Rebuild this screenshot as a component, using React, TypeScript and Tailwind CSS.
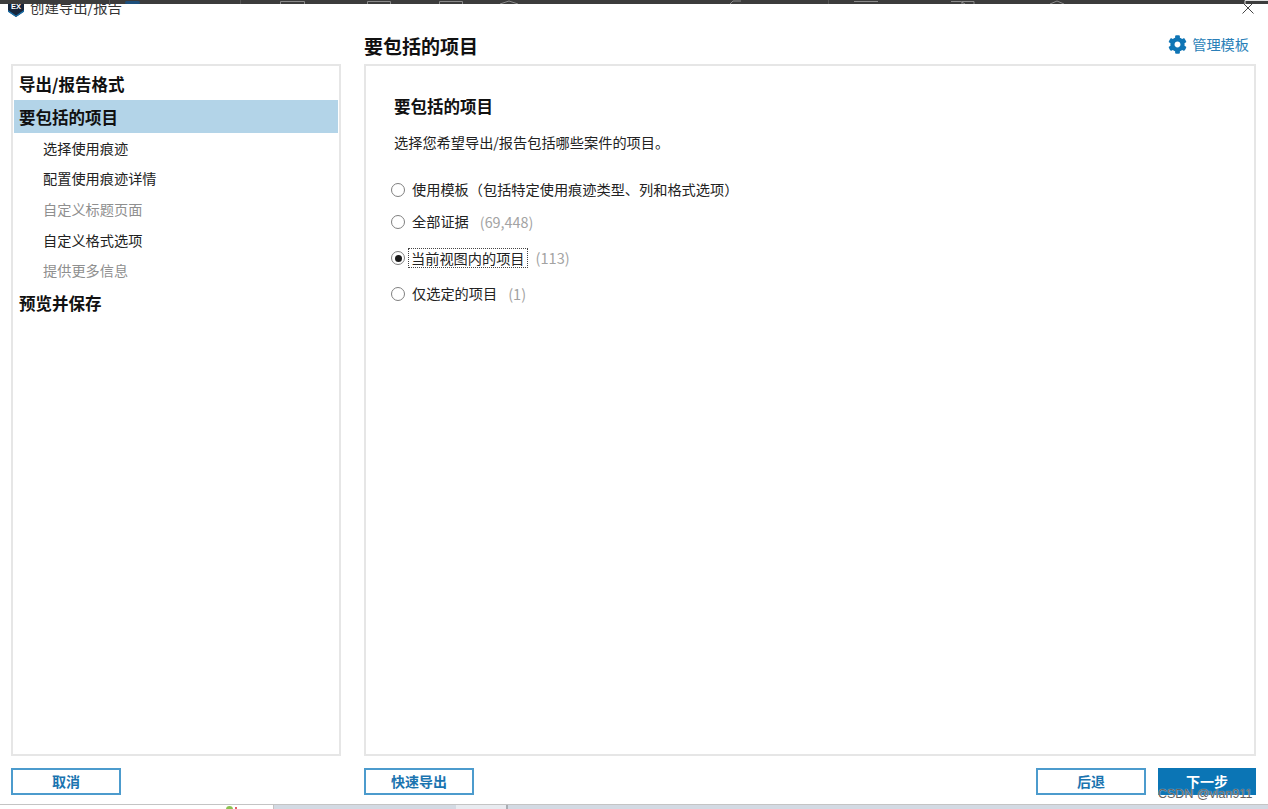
import React from 'react';
import { FaCog } from 'react-icons/fa';

const cjk = '"Noto Sans CJK SC", "Noto Sans", sans-serif';

interface NavItem {
  label: string;
  kind: 'first' | 'last' | 'active' | 'sub' | 'disabled';
}

const navItems: NavItem[] = [
  { label: '导出/报告格式', kind: 'first' },
  { label: '要包括的项目', kind: 'active' },
  { label: '选择使用痕迹', kind: 'sub' },
  { label: '配置使用痕迹详情', kind: 'sub' },
  { label: '自定义标题页面', kind: 'disabled' },
  { label: '自定义格式选项', kind: 'sub' },
  { label: '提供更多信息', kind: 'disabled' },
  { label: '预览并保存', kind: 'last' },
];

const navClass = (kind: NavItem['kind']) => {
  if (kind === 'first') return 'h-[32px] pl-[5px] text-[16.5px] font-bold text-[#111]';
  if (kind === 'last') return 'h-[34px] pl-[5px] text-[16.5px] font-bold text-[#111]';
  if (kind === 'active') return 'h-[33px] pt-[2px] pl-[5px] text-[16.5px] font-bold text-[#111] bg-[#b3d4e8]';
  if (kind === 'sub') return 'h-[30.7px] pl-[29px] text-[14.2px] text-[#222]';
  return 'h-[30.7px] pl-[29px] text-[14.2px] text-[#8f8f8f]';
};

const Radio: React.FC<{ checked?: boolean }> = ({ checked }) => (
  <span className="flex h-[14px] w-[14px] shrink-0 items-center justify-center rounded-full border-[1.5px] border-[#808080] bg-white">
    {checked && <span className="h-[7px] w-[7px] rounded-full bg-[#1a1a1a]" />}
  </span>
);

const OutlineButton: React.FC<{ label: string; className?: string }> = ({ label, className = '' }) => (
  <button className={`h-[27px] w-[110px] border-2 border-[#4c9bcd] bg-white text-[14px] font-bold text-[#1a74b0] ${className}`}>
    {label}
  </button>
);

// 顶部被裁切的工具栏图标残影
const ToolbarScraps = () => (
  <svg className="absolute left-0 top-0" width="1268" height="4" fill="none" stroke="#8a8a8a" strokeWidth="1">
    <path d="M109.5 0v4M240.5 0v4M828.5 0v4" stroke="#555" />
    <path d="M280.5 4V1.5h24V4M367.5 4V1.5h23V4M439.5 4V1.5h23V4" />
    <path d="M500 4l9-3 9 3M1050 4l7-3 7 3" />
    <path d="M854 1.5h24M730 4l3-3h8M951 1.5h10l4 2.5M962 4V1.5h12V4" />
    <path d="M1245 4V0.5h23" stroke="#e0e0e0" />
    <rect x="125" y="1" width="15" height="3" rx="1.5" fill="#1d4f7c" stroke="none" />
  </svg>
);

export default function App() {
  return (
    <div
      className="relative flex h-[809px] w-full flex-col overflow-hidden bg-white"
      style={{ fontFamily: cjk }}
    >
      {/* 窗口上沿 */}
      <div className="relative z-10 h-[4px] shrink-0 bg-[#3c3c3c]">
        <ToolbarScraps />
      </div>

      {/* 标题栏 */}
      <div className="flex h-[10px] shrink-0 items-center pl-[8px] pr-[14px]">
        <svg width="16" height="18" viewBox="0 0 16 18" className="mt-[-2px]">
          <path d="M0 0h16v12.5L8 18 0 12.5z" fill="#17263c" />
          <path d="M0 11l8 5.5 8-5.5v1.8L8 18 0 12.8z" fill="#1a6fa8" />
          <text x="8" y="10" textAnchor="middle" fontSize="7.5" fontWeight="700" fill="#fff" fontFamily="Liberation Sans, sans-serif">
            EX
          </text>
        </svg>
        <span className="ml-[6px] mt-[-3px] text-[14.4px] leading-none text-[#333]">创建导出/报告</span>
        <svg width="12" height="12" viewBox="0 0 12 12" className="ml-auto mt-[-2px]" stroke="#444" strokeWidth="1" fill="none">
          <path d="M.5.5l11 11M11.5.5l-11 11" />
        </svg>
      </div>

      {/* 主体 */}
      <div className="grid flex-1 grid-cols-[330px_1fr] grid-rows-[50px_692px_48px] gap-x-[23px] pl-[11px] pr-[12px]">
        <div />
        <div className="flex items-center justify-between pt-[12px] pr-[7px]">
          <h1 className="text-[19px] font-bold leading-none text-[#111]">要包括的项目</h1>
          <div className="flex items-center gap-[5px] text-[14.2px] text-[#2a7fb8]">
            <FaCog className="h-[19px] w-[19px] text-[#0f75b5]" />
            <span>管理模板</span>
          </div>
        </div>

        {/* 左侧步骤 */}
        <nav className="border-2 border-[#e6e6e6] p-px pt-[2px]">
          {navItems.map((item) => (
            <div key={item.label} className={`flex items-center ${navClass(item.kind)}`}>
              {item.label}
            </div>
          ))}
        </nav>

        {/* 右侧内容 */}
        <section className="border-2 border-[#e6e6e6] pl-[28px] pt-[28px]">
          <h2 className="text-[16.5px] font-bold leading-[24px] text-[#111]">要包括的项目</h2>
          <p className="mt-[14px] text-[14.2px] leading-[20px] text-[#222]">选择您希望导出/报告包括哪些案件的项目。</p>

          <div className="ml-[-3px] mt-[28px] flex flex-col text-[14.2px] text-[#222]">
            <label className="flex h-[20px] items-center gap-[7px]">
              <Radio />
              <span>使用模板（包括特定使用痕迹类型、列和格式选项）</span>
            </label>
            <label className="mt-[12px] flex h-[20px] items-center gap-[7px]">
              <Radio />
              <span>全部证据</span>
              <span className="ml-[4px] text-[14.4px] text-[#a3a3a3]">(69,448)</span>
            </label>
            <label className="mt-[16px] flex h-[20px] items-center">
              <Radio checked />
              <span className="ml-[3px] border border-dotted border-[#444] px-[2px] leading-[18px]">当前视图内的项目</span>
              <span className="ml-[8px] text-[14.6px] text-[#a3a3a3]">(113)</span>
            </label>
            <label className="mt-[16px] flex h-[20px] items-center gap-[7px]">
              <Radio />
              <span>仅选定的项目</span>
              <span className="ml-[4px] text-[14.6px] text-[#a3a3a3]">(1)</span>
            </label>
          </div>
        </section>

        {/* 按钮 */}
        <div className="pt-[12px]">
          <OutlineButton label="取消" />
        </div>
        <div className="flex items-start pt-[12px]">
          <OutlineButton label="快速导出" />
          <OutlineButton label="后退" className="ml-auto w-[109px]" />
          <button className="ml-[12px] h-[27px] w-[98px] bg-[#0b75b5] text-[14px] font-bold text-white">下一步</button>
        </div>
      </div>

      {/* 下方任务栏残影 */}
      <div className="flex h-[6px] shrink-0 border-t border-[#c4c4c4] bg-[#d3dae3]">
        <div className="relative w-[274px] border-r border-[#c4c4c4] bg-white">
          <span className="absolute left-[226px] top-px h-[4px] w-[7px] rounded-t-full bg-[#8cc152]" />
          <span className="absolute left-[235px] top-[2px] h-[3px] w-[2px] bg-[#e0606a]" />
        </div>
        <div className="ml-[182px] w-[50px] bg-[#e8ebf0]" />
        <div className="w-[2px] bg-[#a9adb3]" />
      </div>

      {/* 水印 */}
      <span className="absolute left-[1158px] top-[785px] text-[12.5px] leading-[18px] text-[#5f5f5f] [text-shadow:0_0_1px_#ffffff]" style={{ fontFamily: '"Liberation Sans", sans-serif' }}>
        CSDN @vlan911
      </span>
    </div>
  );
}
